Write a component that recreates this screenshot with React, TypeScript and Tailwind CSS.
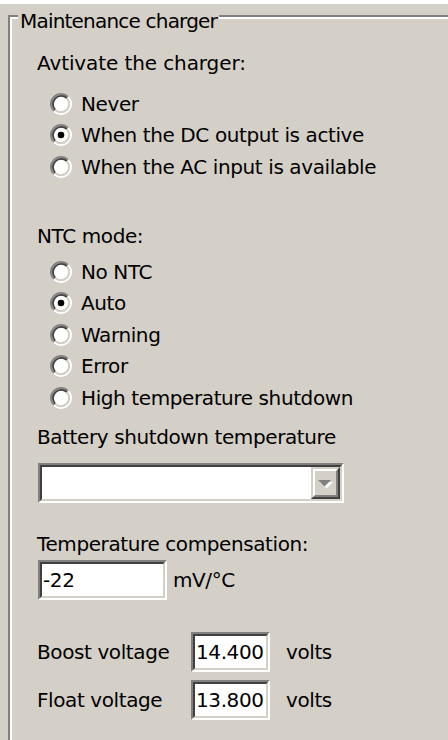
import React from 'react';

type RadioOption = { label: string; checked?: boolean };

const chargerOptions: RadioOption[] = [
  { label: 'Never' },
  { label: 'When the DC output is active', checked: true },
  { label: 'When the AC input is available' },
];

const ntcOptions: RadioOption[] = [
  { label: 'No NTC' },
  { label: 'Auto', checked: true },
  { label: 'Warning' },
  { label: 'Error' },
  { label: 'High temperature shutdown' },
];

// classic 3d radio bullet, drawn on a 12px grid and scaled up
const RadioMark: React.FC<{ checked?: boolean }> = ({ checked }) => (
  <svg width="22" height="22" viewBox="0 0 12 12" className="shrink-0">
    <circle cx="6" cy="6" r="4" fill="#ffffff" />
    <path d="M2.11 9.89A5.5 5.5 0 0 1 9.89 2.11" stroke="#808080" fill="none" />
    <path d="M9.89 2.11A5.5 5.5 0 0 1 2.11 9.89" stroke="#ffffff" fill="none" />
    <path d="M2.82 9.18A4.5 4.5 0 0 1 9.18 2.82" stroke="#404040" fill="none" />
    <path d="M9.18 2.82A4.5 4.5 0 0 1 2.82 9.18" stroke="#d4d0c8" fill="none" />
    {checked && <circle cx="6" cy="6" r="1.8" fill="#000000" />}
  </svg>
);

const RadioList: React.FC<{ options: RadioOption[]; className?: string }> = ({ options, className }) => (
  <div className={className}>
    {options.map((opt) => (
      <div key={opt.label} className="flex h-[31.5px] items-center gap-[9px] pl-[13px]">
        <RadioMark checked={opt.checked} />
        <span>{opt.label}</span>
      </div>
    ))}
  </div>
);

// sunken edit field frame (two bevels)
const Sunken: React.FC<{ className?: string; children?: React.ReactNode }> = ({ className, children }) => (
  <div className={`border-2 border-t-[#808080] border-l-[#808080] border-r-white border-b-white ${className ?? ''}`}>
    <div className="flex h-full items-center border-2 border-t-[#404040] border-l-[#404040] border-r-[#d4d0c8] border-b-[#d4d0c8] bg-white">
      {children}
    </div>
  </div>
);

const ComboBox: React.FC = () => (
  <Sunken className="ml-[1px] h-[40px] w-[306px]">
    <div className="flex-1" />
    <div className="h-full w-[29px] border-2 border-t-[#d4d0c8] border-l-[#d4d0c8] border-r-[#404040] border-b-[#404040]">
      <div className="flex h-full items-center justify-center border-2 border-t-white border-l-white border-r-[#808080] border-b-[#808080] bg-[#d4d0c8] pt-[2px]">
        <svg width="15" height="9" viewBox="0 0 15 9">
          <polygon points="2,2 15,2 8.5,8.5" fill="#ffffff" />
          <polygon points="0,0 13,0 6.5,6.5" fill="#808080" />
        </svg>
      </div>
    </div>
  </Sunken>
);

const VoltageRow: React.FC<{ label: string; value: string; className?: string }> = ({ label, value, className }) => (
  <div className={`flex h-[40px] items-center ${className ?? ''}`}>
    <span className="w-[154px]">{label}</span>
    <Sunken className="h-[40px] w-[79px]">
      <span className="pl-[1px]">{value}</span>
    </Sunken>
    <span className="ml-[16px]">volts</span>
  </div>
);

export default function App() {
  return (
    <div className="h-[740px] w-[448px] overflow-hidden bg-[#d4d0c8] font-['DejaVu_Sans',sans-serif] text-[20px] leading-[24px] tracking-[-0.4px] text-black">
      <div className="h-[4px] bg-white" />

      {/* group box: etched frame, caption sits on the top line */}
      <div className="relative ml-[8px] mt-[11px] h-[800px] border-t-2 border-l-2 border-[#808080]">
        <span className="absolute left-[8px] top-[-8px] bg-[#d4d0c8] px-[2px] tracking-[-0.8px]">Maintenance charger</span>

        <div className="flex h-full flex-col border-t-2 border-l-2 border-white pl-[25px] pt-[29px]">
          <div className="flex h-[30px] items-center tracking-[-0.1px]">Avtivate the charger:</div>
          <RadioList options={chargerOptions} className="mt-[10px]" />

          <div className="mt-[38.5px] flex h-[30px] items-center">NTC mode:</div>
          <RadioList options={ntcOptions} className="mt-[5px]" />

          <div className="mt-[8.5px] flex h-[30px] items-center">Battery shutdown temperature</div>
          <div className="mt-[11px]">
            <ComboBox />
          </div>

          <div className="mt-[26px] flex h-[30px] items-center">Temperature compensation:</div>
          <div className="mt-[1px] flex h-[40px] items-center">
            <Sunken className="ml-[1px] h-[40px] w-[129px]">
              <span className="pl-[1px]">-22</span>
            </Sunken>
            <span className="ml-[6px]">mV/°C</span>
          </div>

          <VoltageRow label="Boost voltage" value="14.400" className="mt-[32px]" />
          <VoltageRow label="Float voltage" value="13.800" className="mt-[8px]" />
        </div>
      </div>
    </div>
  );
}
